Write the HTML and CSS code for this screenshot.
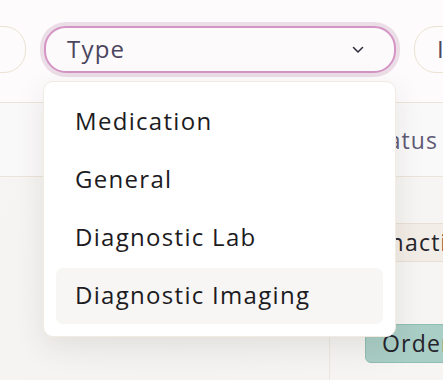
FILE: index.html
```html
<!DOCTYPE html>
<html>
	<head>
		<title>Orders</title>
		<link rel="stylesheet" href="styles.css">
	</head>
	<body>
		<div class="filters">
			<div class="pill pill-left"></div>
			<div class="select-wrap">
				<button class="select">
					<span>Type</span>
					<svg class="chevron" width="12" height="8" viewBox="0 0 12 8"><path d="M1.5 1.5 L6 6 L10.5 1.5" fill="none" stroke="#2f2b3d" stroke-width="1.5" stroke-linecap="round" stroke-linejoin="round"/></svg>
				</button>
				<ul class="menu">
					<li>Medication</li>
					<li>General</li>
					<li>Diagnostic Lab</li>
					<li class="active">Diagnostic Imaging</li>
				</ul>
			</div>
			<div class="pill pill-right">Intent</div>
		</div>

		<table class="orders">
			<thead>
				<tr>
					<th></th>
					<th class="status">Status</th>
				</tr>
			</thead>
			<tbody>
				<tr class="row1">
					<td></td>
					<td class="status"><span class="badge inactive">Inactive</span></td>
				</tr>
				<tr class="row2">
					<td></td>
					<td class="status"><span class="badge ordered">Ordered</span></td>
				</tr>
			</tbody>
		</table>
	</body>
</html>
```

FILE: styles.css
```css
html, body {
	margin: 0;
	padding: 0;
}
body {
	width: 443px;
	height: 380px;
	overflow: hidden;
	font-family: "Open Sans", "Liberation Sans", sans-serif;
	background: radial-gradient(ellipse at 40% 100%, #f4f3f1 0%, #f6f5f3 70%);
}
.filters {
	display: flex;
	gap: 18px;
	align-items: flex-start;
	height: 102px;
	box-sizing: border-box;
	padding-top: 26px;
	margin-left: -120px;
	background-color: #fdfbfc;
}
.pill {
	height: 47px;
	box-sizing: border-box;
	border: 1.5px solid #ebe3d3;
	border-radius: 22px;
	display: flex;
	align-items: center;
	padding: 0 22px 2px 22px;
	font-size: 24px;
	letter-spacing: 1.2px;
	color: #4b4660;
	flex-shrink: 0;
}
.pill-left {
	width: 146px;
}
.pill-right {
	width: 160px;
}
.select-wrap {
	position: relative;
	flex-shrink: 0;
}
.select {
	width: 352px;
	height: 47px;
	box-sizing: border-box;
	border: 2px solid #d494c4;
	border-radius: 22px;
	box-shadow: 0 0 0 4px #ecdee6;
	background-color: #fcfafb;
	display: flex;
	align-items: center;
	justify-content: space-between;
	padding: 0 30px 2px 21px;
	font-family: inherit;
	font-size: 24px;
	letter-spacing: 1.2px;
	color: #4b4660;
}
.chevron {
	display: block;
	margin-top: 2px;
}
.menu {
	position: absolute;
	top: 55px;
	left: -1px;
	width: 353px;
	box-sizing: border-box;
	margin: 0;
	padding: 12px;
	list-style: none;
	background-color: #fff;
	border: 1.5px solid #f1ebe2;
	border-radius: 10px;
	box-shadow: 0 10px 30px rgba(60, 50, 40, 0.10);
	display: flex;
	flex-direction: column;
	gap: 2px;
	z-index: 2;
}
.menu li {
	height: 56px;
	box-sizing: border-box;
	display: flex;
	align-items: center;
	padding: 0 19px 3px 19px;
	font-size: 24px;
	letter-spacing: 1.3px;
	color: #1d1b22;
	border-radius: 7px;
}
.menu li.active {
	background-color: #f7f6f4;
}
.orders {
	width: 600px;
	border-collapse: collapse;
	table-layout: fixed;
}
.orders th {
	height: 73px;
	border-top: 1.5px solid #ebe4d8;
	border-bottom: 1.5px solid #ebe4d8;
	background-color: #faf9f9;
	text-align: left;
	font-weight: 500;
	font-size: 23px;
	letter-spacing: 1px;
	color: #5f5a75;
	padding: 0;
}
.orders th.status, .orders td.status {
	width: 235px;
	padding-left: 35px;
	border-left: 1.5px solid #ebe6de;
	white-space: nowrap;
}
.orders td {
	padding: 0;
	vertical-align: top;
}
.row1 td {
	padding-top: 46px;
	height: 40px;
}
.row2 td {
	padding-top: 61px;
	height: 60px;
}
.badge {
	display: inline-flex;
	align-items: center;
	height: 39px;
	box-sizing: border-box;
	padding: 0 16px 2px 16px;
	border-radius: 6px;
	font-size: 23px;
	letter-spacing: 1.2px;
	color: #25232b;
}
.inactive {
	background-color: #f2ede6;
	border: 1.5px solid #e7dfd3;
}
.ordered {
	background-color: #a9cec6;
	border: 1.5px solid #8fbcb3;
}
```
